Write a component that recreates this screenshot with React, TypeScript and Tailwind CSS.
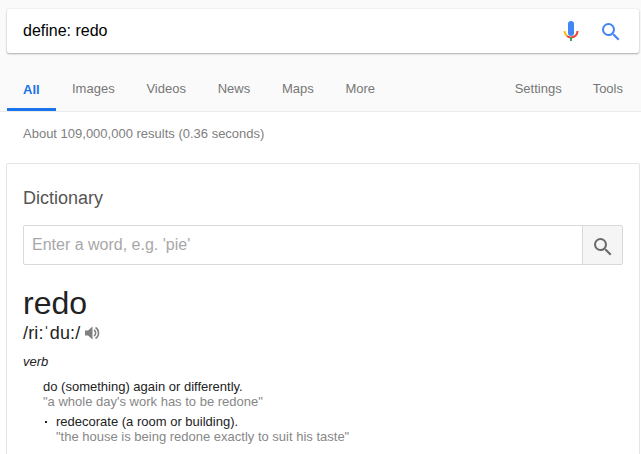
import type { ReactNode } from "react";

const TABS = ["Images", "Videos", "News", "Maps", "More"];

function MicIcon() {
  return (
    <svg width="24" height="24" viewBox="0 0 24 24" className="block">
      <rect x="9" y="2" width="6" height="15" rx="3" fill="#4285f4" />
      <path d="M5.500 12a6.500 6.500 0 0 0 2.500 5" fill="none" stroke="#fbbc05" strokeWidth="2" />
      <path d="M8 17a6.500 6.500 0 0 0 10.500-5" fill="none" stroke="#ea4335" strokeWidth="2" />
      <rect x="11" y="18.500" width="2" height="3.500" fill="#34a853" />
    </svg>
  );
}

function SearchIcon({ color }: { color: string }) {
  return (
    <svg width="24" height="24" viewBox="0 0 24 24" className="block" fill={color}>
      <path d="M15.500 14h-.79l-.28-.27A6.471 6.471 0 0 0 16 9.500 6.500 6.500 0 1 0 9.500 16c1.610 0 3.090-.59 4.230-1.570l.27.28v.79l5 4.990L20.490 19l-4.990-5zm-6 0C7.010 14 5 11.990 5 9.500S7.010 5 9.500 5 14 7.010 14 9.500 11.990 14 9.500 14z" />
    </svg>
  );
}

function SpeakerIcon() {
  return (
    <svg width="16" height="16" viewBox="0 0 16 16" className="block">
      <path d="M1 5.500h3L8.500 1.500v13L4 10.500H1z" fill="#808080" />
      <path d="M10 5a3.500 3.500 0 0 1 0 6" fill="none" stroke="#808080" strokeWidth="1.500" />
      <path d="M11.500 2.500a6.500 6.500 0 0 1 0 11" fill="none" stroke="#808080" strokeWidth="1.500" />
    </svg>
  );
}

function Tab({ children }: { children: ReactNode }) {
  return <a className="text-[13px] leading-[16px] text-[#777]">{children}</a>;
}

export default function App() {
  return (
    <div className="h-[454px] w-[641px] overflow-hidden bg-white font-['Liberation_Sans',Arial,sans-serif]">
      <div className="h-[112px] border-b border-[#ebebeb] bg-[#fafafa] pt-[9px]">
        <div className="mx-[7px] mr-[2px] flex h-[44px] items-center rounded-[2px] bg-white pl-4 pr-[16px] shadow-[0_1px_2px_rgba(0,0,0,0.3),0_0_1px_rgba(0,0,0,0.2)]">
          <span className="flex-1 text-[16px] text-black">define: redo</span>
          <div className="mr-[16px]"><MicIcon /></div>
          <div className="mt-[2px]"><SearchIcon color="#4285f4" /></div>
        </div>
        <div className="mt-[28px] flex h-[30px] items-start pl-[7px] pr-[18px] leading-[16px]">
          <div className="h-[30px] w-[49px] border-b-[3px] border-[#1a73e8] pl-4">
            <span className="text-[13px] font-bold text-[#1a73e8]">All</span>
          </div>
          <div className="ml-4 flex gap-[31.75px]">
            {TABS.map((t) => (
              <Tab key={t}>{t}</Tab>
            ))}
          </div>
          <div className="ml-auto flex gap-[31px]">
            <Tab>Settings</Tab>
            <Tab>Tools</Tab>
          </div>
        </div>
      </div>

      <div className="pl-[23px] pt-[14px] text-[13px] leading-[16px] text-[#808080]">
        About 109,000,000 results (0.36 seconds)
      </div>

      <div className="ml-[6px] mr-[1px] mt-[21px] rounded-t-[2px] border border-[#e5e5e5] px-4 pb-8 pt-[22px]">
        <h2 className="text-[18px] leading-[24px] text-[#555]">Dictionary</h2>
        <div className="mt-[15px] flex h-[40px] rounded-[2px] border border-[#d9d9d9]">
          <span className="flex-1 pl-2 text-[16px] leading-[38px] text-[#a8a8a8]">Enter a word, e.g. 'pie'</span>
          <div className="flex w-[40px] items-center justify-center border-l border-[#d9d9d9] bg-[#f5f5f5] pt-[4px]">
            <SearchIcon color="#6a6a6a" />
          </div>
        </div>
        <div className="mt-[20px] text-[32px] leading-[36px] text-[#222]">redo</div>
        <div className="mt-[1px] flex items-center gap-[4px] text-[18px] leading-[22px] tracking-[0.15px] text-[#222]">
          <span>/ri:ˈdu:/</span>
          <SpeakerIcon />
        </div>
        <div className="mt-[10px] text-[13px] italic leading-[16px] text-[#222]">verb</div>
        <div className="ml-[20px] mt-[9px] text-[13px] leading-[15px]">
          <div className="text-[#222]">do (something) again or differently.</div>
          <div className="text-[#878787]">"a whole day's work has to be redone"</div>
          <div className="relative mt-[5px] pl-[13px]">
            <span className="absolute left-[2px] top-[7px] h-[2px] w-[2px] bg-[#222]" />
            <div className="text-[#222]">redecorate (a room or building).</div>
            <div className="text-[#878787]">"the house is being redone exactly to suit his taste"</div>
          </div>
        </div>
      </div>
    </div>
  );
}
